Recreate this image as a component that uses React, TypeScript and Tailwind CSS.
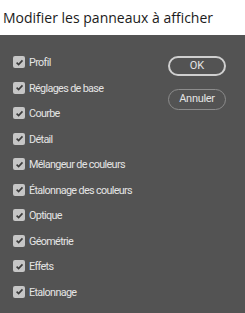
const items = [
  "Profil",
  "Réglages de base",
  "Courbe",
  "Détail",
  "Mélangeur de couleurs",
  "Étalonnage des couleurs",
  "Optique",
  "Géométrie",
  "Effets",
  "Etalonnage",
];

const CheckBox = () => (
  <span className="flex h-[12px] w-[12px] shrink-0 items-center justify-center rounded-[2px] bg-[#c6c6c6]">
    <svg width="9" height="9" viewBox="0 0 10 10">
      <path d="M1.8 5.2 L4 7.3 L8.3 2.6" fill="none" stroke="#3b3b3b" strokeWidth="1.8" />
    </svg>
  </span>
);

export default function App() {
  return (
    <div className="flex h-[313px] w-[245px] flex-col font-['Open_Sans',sans-serif]">
      <div className="flex h-[35px] items-center bg-white pl-[3px] text-[14px] text-[#1b1b1b]">
        Modifier les panneaux à afficher
      </div>
      <div className="flex flex-1 bg-[#535353] pl-[13px] pr-[19px] pt-[21px]">
        <div className="flex flex-1 flex-col">
          {items.map((label) => (
            <div key={label} className="flex h-[25.5px] items-start gap-[4px]">
              <CheckBox />
              <span className="-mt-[1px] font-['Roboto',sans-serif] text-[10.8px] tracking-[-0.65px] text-[#e4e4e4]">
                {label}
              </span>
            </div>
          ))}
        </div>
        <div className="flex w-[58px] flex-col gap-[13px] font-['Roboto',sans-serif]">
          <button className="h-[20px] rounded-full border-2 border-[#cfcfcf] text-[11px] text-[#e4e4e4]">
            OK
          </button>
          <button className="h-[21px] rounded-full border border-[#8c8c8c] text-[11px] tracking-[-0.3px] text-[#e4e4e4]">
            Annuler
          </button>
        </div>
      </div>
    </div>
  );
}
